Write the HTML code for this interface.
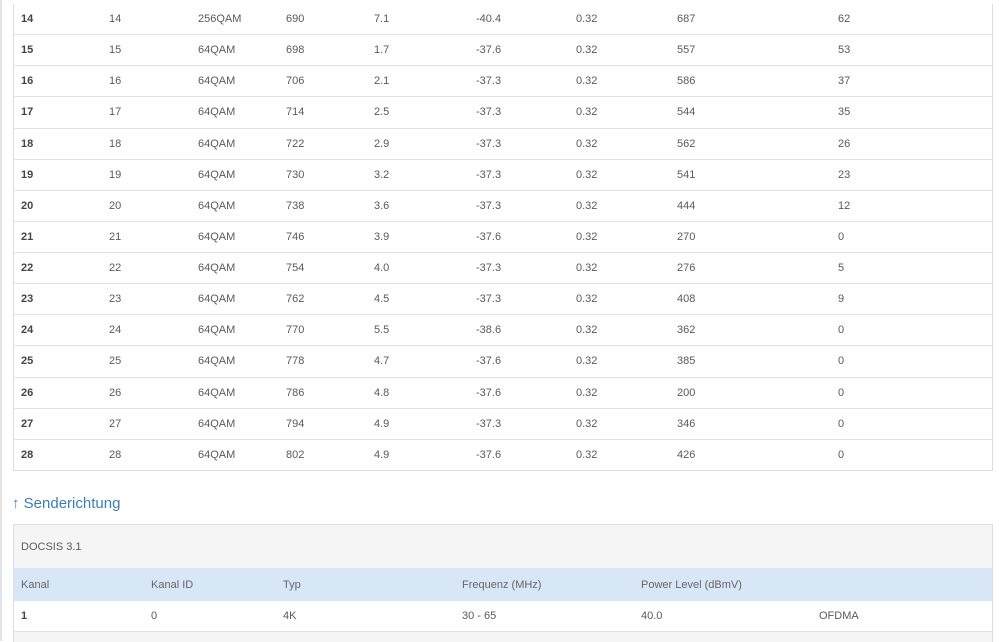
<!DOCTYPE html>
<html><head><meta charset="utf-8"><style>
body{margin:0;width:999px;height:641px;overflow:hidden;background:#fff;font-family:"Liberation Sans",sans-serif;font-size:11px;color:#5a5a5a;position:relative}
.lb{position:absolute;left:0;top:0;width:2px;height:641px;background:#e4e4e4}
.t1{position:absolute;left:13px;top:4px;width:978px;border:1px solid #ddd;border-top:none}
.r{position:relative;height:30.14px;border-bottom:1px solid #e2e2e2}
.r:last-child{border-bottom:none}
.r span,.r2 span{position:absolute;top:50%;transform:translateY(-50%)}
.r span:first-child{font-weight:bold;color:#444}
h3{position:absolute;left:12px;top:495px;margin:0;font-weight:normal;font-size:15px;color:#3d7eb5}
.t2{position:absolute;left:13px;top:524px;width:978px;height:117px;border:1px solid #ddd;border-bottom:none;background:#f5f5f5}
.r2{position:absolute;left:0;width:978px}
</style></head><body>
<div class="lb"></div>
<div class="t1">
<div class="r"><span style="left:7px">14</span><span style="left:95px">14</span><span style="left:184px">256QAM</span><span style="left:272px">690</span><span style="left:360px">7.1</span><span style="left:462px">-40.4</span><span style="left:562px">0.32</span><span style="left:663px">687</span><span style="left:824px">62</span></div>
<div class="r"><span style="left:7px">15</span><span style="left:95px">15</span><span style="left:184px">64QAM</span><span style="left:272px">698</span><span style="left:360px">1.7</span><span style="left:462px">-37.6</span><span style="left:562px">0.32</span><span style="left:663px">557</span><span style="left:824px">53</span></div>
<div class="r"><span style="left:7px">16</span><span style="left:95px">16</span><span style="left:184px">64QAM</span><span style="left:272px">706</span><span style="left:360px">2.1</span><span style="left:462px">-37.3</span><span style="left:562px">0.32</span><span style="left:663px">586</span><span style="left:824px">37</span></div>
<div class="r"><span style="left:7px">17</span><span style="left:95px">17</span><span style="left:184px">64QAM</span><span style="left:272px">714</span><span style="left:360px">2.5</span><span style="left:462px">-37.3</span><span style="left:562px">0.32</span><span style="left:663px">544</span><span style="left:824px">35</span></div>
<div class="r"><span style="left:7px">18</span><span style="left:95px">18</span><span style="left:184px">64QAM</span><span style="left:272px">722</span><span style="left:360px">2.9</span><span style="left:462px">-37.3</span><span style="left:562px">0.32</span><span style="left:663px">562</span><span style="left:824px">26</span></div>
<div class="r"><span style="left:7px">19</span><span style="left:95px">19</span><span style="left:184px">64QAM</span><span style="left:272px">730</span><span style="left:360px">3.2</span><span style="left:462px">-37.3</span><span style="left:562px">0.32</span><span style="left:663px">541</span><span style="left:824px">23</span></div>
<div class="r"><span style="left:7px">20</span><span style="left:95px">20</span><span style="left:184px">64QAM</span><span style="left:272px">738</span><span style="left:360px">3.6</span><span style="left:462px">-37.3</span><span style="left:562px">0.32</span><span style="left:663px">444</span><span style="left:824px">12</span></div>
<div class="r"><span style="left:7px">21</span><span style="left:95px">21</span><span style="left:184px">64QAM</span><span style="left:272px">746</span><span style="left:360px">3.9</span><span style="left:462px">-37.6</span><span style="left:562px">0.32</span><span style="left:663px">270</span><span style="left:824px">0</span></div>
<div class="r"><span style="left:7px">22</span><span style="left:95px">22</span><span style="left:184px">64QAM</span><span style="left:272px">754</span><span style="left:360px">4.0</span><span style="left:462px">-37.3</span><span style="left:562px">0.32</span><span style="left:663px">276</span><span style="left:824px">5</span></div>
<div class="r"><span style="left:7px">23</span><span style="left:95px">23</span><span style="left:184px">64QAM</span><span style="left:272px">762</span><span style="left:360px">4.5</span><span style="left:462px">-37.3</span><span style="left:562px">0.32</span><span style="left:663px">408</span><span style="left:824px">9</span></div>
<div class="r"><span style="left:7px">24</span><span style="left:95px">24</span><span style="left:184px">64QAM</span><span style="left:272px">770</span><span style="left:360px">5.5</span><span style="left:462px">-38.6</span><span style="left:562px">0.32</span><span style="left:663px">362</span><span style="left:824px">0</span></div>
<div class="r"><span style="left:7px">25</span><span style="left:95px">25</span><span style="left:184px">64QAM</span><span style="left:272px">778</span><span style="left:360px">4.7</span><span style="left:462px">-37.6</span><span style="left:562px">0.32</span><span style="left:663px">385</span><span style="left:824px">0</span></div>
<div class="r"><span style="left:7px">26</span><span style="left:95px">26</span><span style="left:184px">64QAM</span><span style="left:272px">786</span><span style="left:360px">4.8</span><span style="left:462px">-37.6</span><span style="left:562px">0.32</span><span style="left:663px">200</span><span style="left:824px">0</span></div>
<div class="r"><span style="left:7px">27</span><span style="left:95px">27</span><span style="left:184px">64QAM</span><span style="left:272px">794</span><span style="left:360px">4.9</span><span style="left:462px">-37.3</span><span style="left:562px">0.32</span><span style="left:663px">346</span><span style="left:824px">0</span></div>
<div class="r"><span style="left:7px">28</span><span style="left:95px">28</span><span style="left:184px">64QAM</span><span style="left:272px">802</span><span style="left:360px">4.9</span><span style="left:462px">-37.6</span><span style="left:562px">0.32</span><span style="left:663px">426</span><span style="left:824px">0</span></div>
</div>
<h3>↑ Senderichtung</h3>
<div class="t2">
<div class="r2" style="top:0;height:43px"><span style="left:7px">DOCSIS 3.1</span></div>
<div class="r2" style="top:43px;height:33px;background:#d7e7f5;color:#666"><span style="left:7px">Kanal</span><span style="left:137px">Kanal ID</span><span style="left:269px">Typ</span><span style="left:448px">Frequenz (MHz)</span><span style="left:627px">Power Level (dBmV)</span></div>
<div class="r2" style="top:76px;height:30px;background:#fff;border-bottom:1px solid #e2e2e2"><span style="left:7px;font-weight:bold;color:#444">1</span><span style="left:137px">0</span><span style="left:269px">4K</span><span style="left:448px">30 - 65</span><span style="left:627px">40.0</span><span style="left:805px">OFDMA</span></div>
</div>
</body></html>
